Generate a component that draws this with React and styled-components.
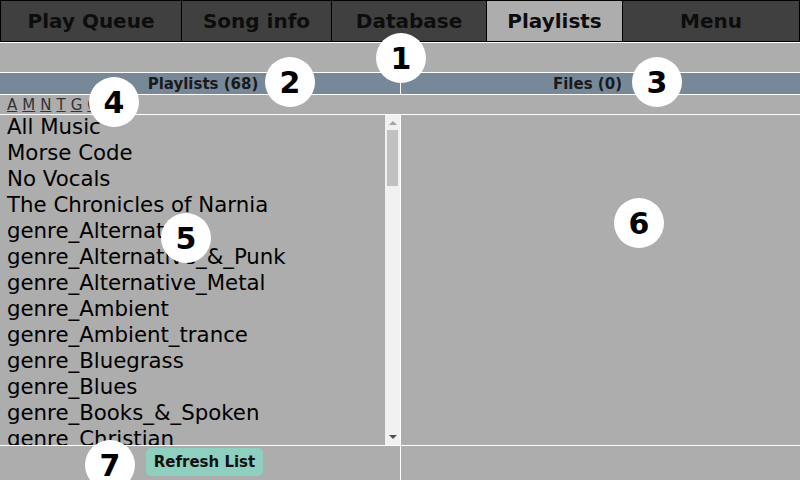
import styled, { createGlobalStyle } from "styled-components";

const tabs = [
  { label: "Play Queue", width: 181 },
  { label: "Song info", width: 150 },
  { label: "Database", width: 155 },
  { label: "Playlists", width: 136, active: true },
  { label: "Menu", width: 178 },
];

const playlists = [
  "All Music",
  "Morse Code",
  "No Vocals",
  "The Chronicles of Narnia",
  "genre_Alternative",
  "genre_Alternative_&_Punk",
  "genre_Alternative_Metal",
  "genre_Ambient",
  "genre_Ambient_trance",
  "genre_Bluegrass",
  "genre_Blues",
  "genre_Books_&_Spoken",
  "genre_Christian",
];

const letters = ["A", "M", "N", "T", "G", "O"];

const markers = [
  { n: 1, x: 401, y: 58 },
  { n: 2, x: 290, y: 82 },
  { n: 3, x: 657, y: 82 },
  { n: 4, x: 114, y: 102 },
  { n: 5, x: 186, y: 238 },
  { n: 6, x: 639, y: 223 },
  { n: 7, x: 110, y: 465 },
];

const GlobalStyle = createGlobalStyle`
  html, body {
    margin: 0;
    padding: 0;
    background: #adadad;
  }
  body {
    font-family: "DejaVu Sans", "Liberation Sans", sans-serif;
  }
`;

const App = () => {
  return (
    <Page>
      <GlobalStyle />
      <TabBar>
        {tabs.map((t) => (
          <Tab key={t.label} $width={t.width} $active={t.active}>
            {t.label}
          </Tab>
        ))}
      </TabBar>
      <Grid>
        <SpacerRow />
        <Header $left={6}>Playlists (68)</Header>
        <Header $right={26}>Files (0)</Header>
        <LetterRow>
          {letters.map((l) => (
            <Letter key={l}>{l}</Letter>
          ))}
        </LetterRow>
        <ListPane>
          <List>
            {playlists.map((p) => (
              <Item key={p}>{p}</Item>
            ))}
          </List>
          <Scrollbar>
            <ArrowUp />
            <Track>
              <Thumb />
            </Track>
            <ArrowDown />
          </Scrollbar>
        </ListPane>
        <FilesPane />
        <Footer>
          <RefreshButton>Refresh List</RefreshButton>
        </Footer>
        <Footer />
      </Grid>
      {markers.map((m) => (
        <Marker key={m.n} style={{ left: m.x - 25, top: m.y - 25 }}>
          {m.n}
        </Marker>
      ))}
    </Page>
  );
};

const Page = styled.div`
  position: relative;
  width: 800px;
  height: 480px;
  overflow: hidden;
  background: #adadad;
`;

const TabBar = styled.div`
  display: flex;
  height: 42px;
  box-sizing: border-box;
  border-top: 1px solid #000;
  border-bottom: 1px solid #000;
  background: #404040;
`;

const Tab = styled.div`
  width: ${(p) => p.$width}px;
  box-sizing: border-box;
  border-left: 1px solid #000;
  display: flex;
  align-items: center;
  justify-content: center;
  font-size: 20px;
  font-weight: bold;
  color: #0d0d0d;
  background: ${(p) => (p.$active ? "#adadad" : "#404040")};
  &:last-child {
    border-right: 1px solid #000;
  }
`;

const Grid = styled.div`
  display: grid;
  grid-template-columns: 400px 399px;
  grid-template-rows: 29px 21px 19px 330px 34px;
  gap: 1px;
  padding-top: 1px;
  background: #fff;
  width: 800px;
  height: 438px;
  box-sizing: border-box;
`;

const SpacerRow = styled.div`
  grid-column: 1 / span 2;
  background: #adadad;
`;

const Header = styled.div`
  background: #778899;
  display: flex;
  align-items: center;
  justify-content: center;
  padding-left: ${(p) => p.$left || 0}px;
  padding-right: ${(p) => p.$right || 0}px;
  font-size: 15px;
  font-weight: bold;
  color: #1a1a1a;
`;

const LetterRow = styled.div`
  grid-column: 1 / span 2;
  background: #adadad;
  display: flex;
  align-items: center;
  gap: 5px;
  padding-left: 7px;
`;

const Letter = styled.a`
  font-size: 15px;
  color: #333;
  text-decoration: underline;
`;

const ListPane = styled.div`
  background: #adadad;
  display: flex;
  overflow: hidden;
`;

const List = styled.div`
  flex: 1;
  overflow: hidden;
  padding-left: 7px;
`;

const Item = styled.div`
  font-size: 21.3px;
  line-height: 26px;
  color: #000;
  white-space: nowrap;
  margin-top: -1px;
  margin-bottom: 1px;
`;

const Scrollbar = styled.div`
  width: 15px;
  background: #f1f1f1;
  display: flex;
  flex-direction: column;
  align-items: center;
`;

const ArrowUp = styled.div`
  margin-top: 6px;
  width: 0;
  height: 0;
  border-left: 4px solid transparent;
  border-right: 4px solid transparent;
  border-bottom: 4px solid #a3a3a3;
`;

const ArrowDown = styled.div`
  margin-bottom: 6px;
  width: 0;
  height: 0;
  border-left: 4px solid transparent;
  border-right: 4px solid transparent;
  border-top: 4px solid #505050;
`;

const Track = styled.div`
  flex: 1;
  align-self: stretch;
  padding: 5px 2px 0;
`;

const Thumb = styled.div`
  height: 56px;
  background: #c1c1c1;
`;

const FilesPane = styled.div`
  background: #adadad;
`;

const Footer = styled.div`
  background: #adadad;
  display: flex;
  align-items: center;
  justify-content: center;
`;

const RefreshButton = styled.button`
  font-family: "DejaVu Sans", sans-serif;
  font-size: 15px;
  font-weight: bold;
  color: #111;
  background: #8ecfc0;
  border: none;
  border-radius: 5px;
  height: 28px;
  padding: 0 8px;
  margin-left: 9px;
  margin-bottom: 2px;
`;

const Marker = styled.div`
  position: absolute;
  width: 50px;
  height: 50px;
  border-radius: 50%;
  background: #fff;
  display: flex;
  align-items: center;
  justify-content: center;
  font-size: 30px;
  font-weight: bold;
  color: #000;
`;

export default App;
